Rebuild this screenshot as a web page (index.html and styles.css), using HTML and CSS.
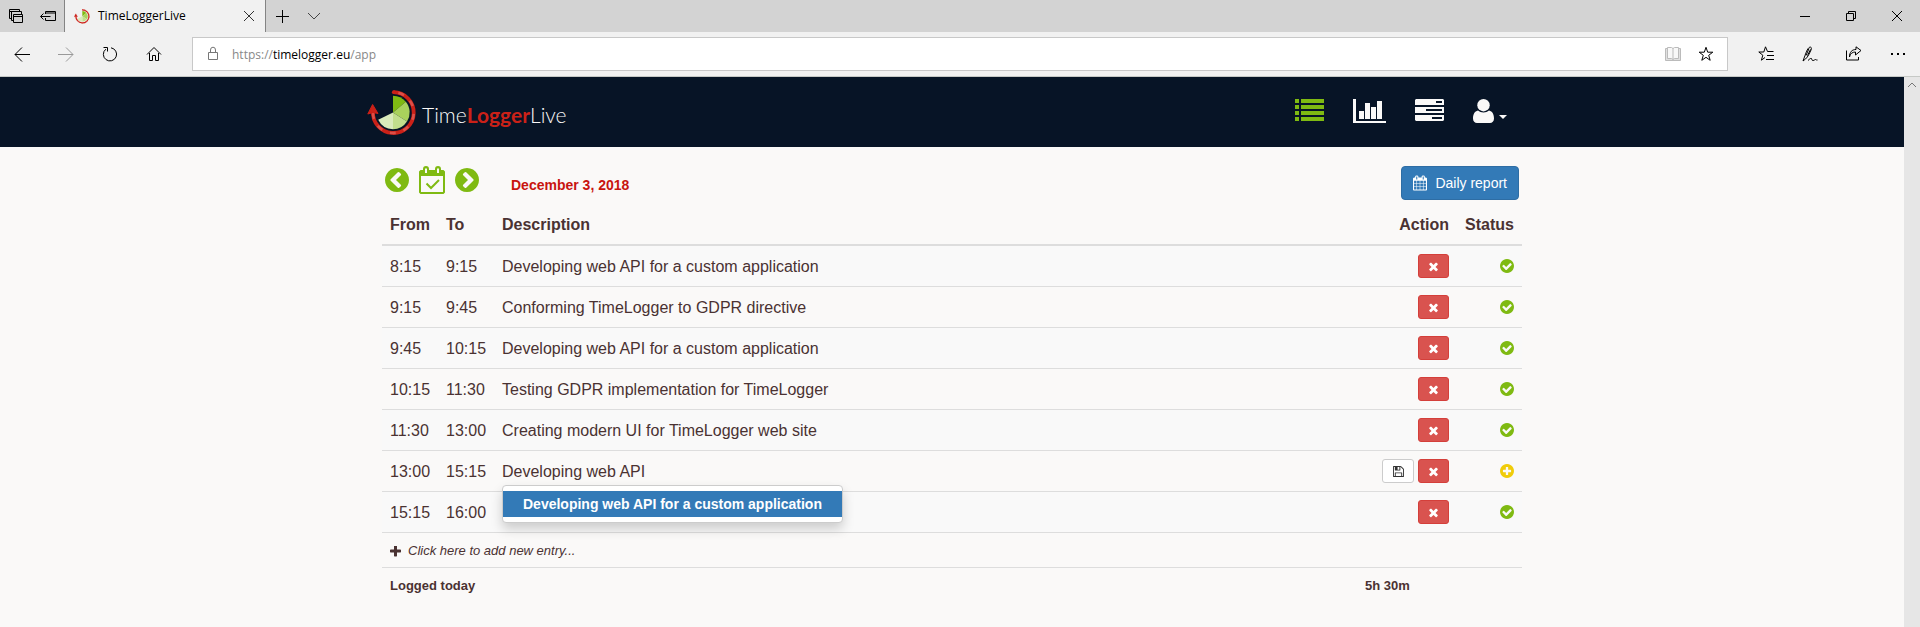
FILE: index.html
```html
<!DOCTYPE html>
<html lang="en">
<head>
<meta charset="utf-8">
<title>TimeLoggerLive</title>
<link rel="stylesheet" href="styles.css">
</head>
<body>
<svg class="sprite" aria-hidden="true">
  <symbol id="check-circle" viewBox="128 128 1536 1536"><path d="M1412 734q0-28-18-46l-91-90q-19-19-45-19t-45 19l-408 407-226-226q-19-19-45-19t-45 19l-91 90q-18 18-18 46 0 27 18 45l362 362q19 19 45 19 27 0 46-19l543-543q18-18 18-45zm252 162q0 209-103 385.5t-279.5 279.5-385.5 103-385.5-103-279.5-279.5-103-385.5 103-385.5 279.5-279.5 385.5-103 385.5 103 279.5 279.5 103 385.5z"/></symbol>
  <symbol id="plus-circle" viewBox="128 128 1536 1536"><path d="M1344 960v-128q0-26-19-45t-45-19h-256v-256q0-26-19-45t-45-19h-128q-26 0-45 19t-19 45v256h-256q-26 0-45 19t-19 45v128q0 26 19 45t45 19h256v256q0 26 19 45t45 19h128q26 0 45-19t19-45v-256h256q26 0 45-19t19-45zm320-64q0 209-103 385.5t-279.5 279.5-385.5 103-385.5-103-279.5-279.5-103-385.5 103-385.5 279.5-279.5 385.5-103 385.5 103 279.5 279.5 103 385.5z"/></symbol>
  <symbol id="chevron-left" viewBox="0 0 1792 1792"><path d="M1037 1395l102-102q19-19 19-45t-19-45l-307-307 307-307q19-19 19-45t-19-45l-102-102q-19-19-45-19t-45 19l-454 454q-19 19-19 45t19 45l454 454q19 19 45 19t45-19zm627-499q0 209-103 385.5t-279.5 279.5-385.5 103-385.5-103-279.5-279.5-103-385.5 103-385.5 279.5-279.5 385.5-103 385.5 103 279.5 279.5 103 385.5z"/></symbol>
  <symbol id="chevron-right" viewBox="0 0 1792 1792"><path d="M845 1395l454-454q19-19 19-45t-19-45l-454-454q-19-19-45-19t-45 19l-102 102q-19 19-19 45t19 45l307 307-307 307q-19 19-19 45t19 45l102 102q19 19 45 19t45-19zm819-499q0 209-103 385.5t-279.5 279.5-385.5 103-385.5-103-279.5-279.5-103-385.5 103-385.5 279.5-279.5 385.5-103 385.5 103 279.5 279.5 103 385.5z"/></symbol>
  <symbol id="times" viewBox="0 0 1792 1792"><path d="M1490 1322q0 40-28 68l-136 136q-28 28-68 28t-68-28l-294-294-294 294q-28 28-68 28t-68-28l-136-136q-28-28-28-68t28-68l294-294-294-294q-28-28-28-68t28-68l136-136q28-28 68-28t68 28l294 294 294-294q28-28 68-28t68 28l136 136q28 28 28 68t-28 68l-294 294 294 294q28 28 28 68z"/></symbol>
  <symbol id="plus" viewBox="192 192 1408 1408"><path d="M1600 736v192q0 40-28 68t-68 28h-416v416q0 40-28 68t-68 28h-192q-40 0-68-28t-28-68v-416h-416q-40 0-68-28t-28-68v-192q0-40 28-68t68-28h416v-416q0-40 28-68t68-28h192q40 0 68 28t28 68v416h416q40 0 68 28t28 68z"/></symbol>
  <symbol id="calendar" viewBox="64 0 1664 1792"><path d="M192 1664h288v-288h-288v288zm352 0h320v-288h-320v288zm-352-352h288v-320h-288v320zm352 0h320v-320h-320v320zm-352-384h288v-288h-288v288zm736 736h320v-288h-320v288zm-384-736h320v-288h-320v288zm768 736h288v-288h-288v288zm-384-352h320v-320h-320v320zm-352-864v-288q0-13-9.500-22.500t-22.500-9.500h-64q-13 0-22.500 9.500t-9.500 22.500v288q0 13 9.500 22.500t22.500 9.500h64q13 0 22.500-9.500t9.500-22.500zm736 864h288v-320h-288v320zm-384-384h320v-288h-320v288zm384 0h288v-288h-288v288zm32-480v-288q0-13-9.500-22.500t-22.500-9.500h-64q-13 0-22.500 9.500t-9.500 22.500v288q0 13 9.500 22.500t22.500 9.500h64q13 0 22.500-9.500t9.500-22.500zm384-64v1280q0 52-38 90t-90 38h-1408q-52 0-90-38t-38-90v-1280q0-52 38-90t90-38h128v-96q0-66 47-113t113-47h64q66 0 113 47t47 113v96h384v-96q0-66 47-113t113-47h64q66 0 113 47t47 113v96h128q52 0 90 38t38 90z"/></symbol>
  <symbol id="save" viewBox="128 128 1536 1536"><path d="M512 1536h768v-384h-768v384zm896 0h128v-896q0-14-10-38.500t-20-34.500l-281-281q-10-10-34-20t-39-10v416q0 40-28 68t-68 28h-576q-40 0-68-28t-28-68v-416h-128v1280h128v-416q0-40 28-68t68-28h832q40 0 68 28t28 68v416zm-384-928v-320q0-13-9.500-22.500t-22.500-9.500h-192q-13 0-22.500 9.500t-9.500 22.500v320q0 13 9.500 22.500t22.500 9.500h192q13 0 22.500-9.500t9.500-22.500zm640 32v928q0 40-28 68t-68 28h-1344q-40 0-68-28t-28-68v-1344q0-40 28-68t68-28h928q40 0 88 20t76 48l280 280q28 28 48 76t20 88z"/></symbol>
  <symbol id="logo" viewBox="0 0 50 46">
    <path fill="#7fba12" d="M26 22.500V5.800A16.700 16.700 0 0 1 38.800 11.800Z"/>
    <path fill="#a9d25c" d="M26 22.500 38.800 11.800A16.700 16.700 0 0 1 40 31.500Z"/>
    <path fill="#c1df8c" d="M26 22.500 40 31.500A16.700 16.700 0 0 1 26 39.200Z"/>
    <path fill="#d9ebbb" d="M26 22.500V39.200A16.700 16.700 0 0 1 11.200 29.800Z"/>
    <path fill="none" stroke="#cb2118" stroke-width="3.800" d="M26.500 2.200A20.400 20.400 0 1 1 6 21"/>
    <path fill="none" stroke="#dc5048" stroke-width="2.600" stroke-dasharray="6 8" stroke-dashoffset="-5" d="M26.500 2.200A20.400 20.400 0 1 1 6 21"/>
    <circle cx="26.800" cy="2.200" r="1.900" fill="#cb2118"/>
    <path fill="#cb2118" stroke="#cb2118" stroke-width="1" stroke-linejoin="round" d="M5.600 14.500 11 23.500 6 22.500.8 24Z"/>
  </symbol>
</svg>

<header class="browser">
  <div class="titlebar">
    <button class="chrome-btn small" aria-label="Tabs set aside"><svg width="16" height="16" viewBox="0 0 16 16"><path d="M3.500 10.500h-2V1.500h10v2M1.500 3.500h9M5.500 12.500h-2V4M4 3.500h9.500V6M5.500 6.500h9v8h-9zM5.500 8.500h9"/></svg></button>
    <button class="chrome-btn small" aria-label="Set these tabs aside"><svg width="16" height="16" viewBox="0 0 16 16"><path d="M5.500 6V3.500h10v9h-10V10M5.500 5h10M.7 8.500h9.800M3.500 5.500l-3 3 3 3"/></svg></button>
    <div class="tab">
      <svg class="favicon"><use href="#logo"/></svg>
      <span class="tab-title">TimeLoggerLive</span>
      <button class="tab-close" aria-label="Close tab"><svg width="12" height="12" viewBox="0 0 12 12"><path d="M1 1l10 10M11 1L1 11"/></svg></button>
    </div>
    <button class="chrome-btn small" aria-label="New tab"><svg width="14" height="14" viewBox="0 0 14 14"><path d="M7.500 1v13M1 7.500h13"/></svg></button>
    <button class="chrome-btn small grey" aria-label="Tab previews"><svg width="14" height="14" viewBox="0 0 14 14"><path d="M1 4l6 6 6-6"/></svg></button>
    <div class="window-btns">
      <button class="chrome-btn wide" aria-label="Minimize"><svg width="12" height="12" viewBox="0 0 12 12"><path d="M1 6.500h10"/></svg></button>
      <button class="chrome-btn wide" aria-label="Restore"><svg width="12" height="12" viewBox="0 0 12 12"><path d="M1.500 3.500h7v7h-7zM3.500 3V1.500h7v7H9"/></svg></button>
      <button class="chrome-btn wide" aria-label="Close"><svg width="12" height="12" viewBox="0 0 12 12"><path d="M1 1l10 10M11 1L1 11"/></svg></button>
    </div>
  </div>
  <div class="toolbar">
    <div class="tool-group">
      <button class="chrome-btn" aria-label="Back"><svg width="16" height="16" viewBox="0 0 16 16"><path d="M1 8.500h15M8 1.500l-7 7 7 7"/></svg></button>
      <button class="chrome-btn faded" aria-label="Forward"><svg width="16" height="16" viewBox="0 0 16 16"><path d="M0 8.500h15M8 1.500l7 7-7 7"/></svg></button>
      <button class="chrome-btn" aria-label="Refresh"><svg width="16" height="16" viewBox="0 0 16 16"><path d="M9 1.800A6.600 6.600 0 1 1 3.800 3.200M1.500 1.500h4v4"/></svg></button>
      <button class="chrome-btn" aria-label="Home"><svg width="16" height="16" viewBox="0 0 16 16"><path d="M1 8.500l7-7 7 7M3.500 7v7.500h3V9.500h3v5h3V7"/></svg></button>
    </div>
    <div class="address">
      <svg class="lock" width="12" height="16" viewBox="0 0 12 16"><path d="M1.500 6.500h9v7h-9zM3.500 6V4a2.500 2.800 0 0 1 5 0v2"/></svg>
      <div class="url" role="textbox" contenteditable="true" spellcheck="false" aria-label="Address">https://<span class="host">timelogger.eu</span>/app</div>
      <button class="in-address book" aria-label="Reading view"><svg width="18" height="16" viewBox="0 0 18 16"><path fill="#e0e0e0" d="M1.500 2.500h15v12h-15z"/><path fill="#f8f8f8" d="M3.500 1.500h4l1.500 1 1.500-1h4v11h-4l-1.500 1-1.500-1h-4zM9 2.500v11"/></svg></button>
      <button class="in-address" aria-label="Favorite"><svg width="16" height="16" viewBox="0 0 16 16"><path d="M8 1.300l1.700 4.900h5.100l-4.100 3.100 1.500 5L8 11.300l-4.200 3 1.500-5-4.100-3.100h5.100z"/></svg></button>
    </div>
    <div class="tool-group">
      <button class="chrome-btn" aria-label="Hub"><svg width="16" height="16" viewBox="0 0 16 16"><path d="M15.500 5.500H9.500L7.500.8 5.800 6H.8l4 3.200-1.400 5L7 11.500M9 9.500h7M8 13.500h8"/></svg></button>
      <button class="chrome-btn" aria-label="Add notes"><svg width="16" height="16" viewBox="0 0 16 16"><path d="M1 15l2-5.500C4.500 5 6 2 7.500 1.300s2.500.5 1.500 2.700-3 7-5.500 9L1 15M4 9.500l3-7M5.500 9.500l3-6M6 14.500c2-2 3-2.500 3.500-2s0 2 1.500 2 1.500-1 2.500-1 1 1 2 .5"/></svg></button>
      <button class="chrome-btn" aria-label="Share"><svg width="16" height="16" viewBox="0 0 16 16"><path d="M.5 4.500v9.500h12v-3M3.500 11c.5-3.500 3-5 6-5v3l5.500-4.500L10 .8v2.700C6 3.500 3.500 6 3.500 11z"/></svg></button>
      <button class="chrome-btn" aria-label="More"><svg width="16" height="16" viewBox="0 0 16 16"><path stroke-width="2" d="M1 8h2M7 8h2M13 8h2"/></svg></button>
    </div>
  </div>
</header>

<div class="viewport">
  <div class="page">
    <nav class="navbar">
      <div class="container nav-inner">
        <a class="brand" href="#"><svg class="brand-logo"><use href="#logo"/></svg><span>Time<b>Logger</b>Live</span></a>
        <div class="menu">
          <a class="active" href="#" aria-label="Time entries"><svg width="29" height="24" viewBox="0 0 29 24"><path d="M0 0h4v4H0zM6 0h23v4H6zM0 6h4v4H0zM6 6h23v4H6zM0 12h4v4H0zM6 12h23v4H6zM0 18h4v4H0zM6 18h23v4H6z"/></svg></a>
          <a href="#" aria-label="Charts"><svg width="33" height="24" viewBox="0 0 33 24"><path d="M0 0h3v22h30v2H0zM6 12h5v8H6zM12 4h5v16h-5zM18 8h5v12h-5zM24 2h5v18h-5z"/></svg></a>
          <a href="#" aria-label="Projects"><svg width="29" height="24" viewBox="0 0 29 24"><path fill-rule="evenodd" d="M1 0h27l1 1v5H0V1zM0 8h29v6H0zM0 16h29v5l-1 1H1l-1-1zM21 2v2h6V2zM11 10v2h16v-2zM17 18v2h10v-2z"/></svg></a>
          <a href="#" aria-label="Account"><svg width="35" height="24" viewBox="0 0 35 24"><path d="M5 11.500c1.400 1.300 3.300 2 5.500 2s4.100-.7 5.500-2c3.500.8 5 4 5 8 0 2.800-1.800 4.500-4 4.500H4c-2.200 0-4-1.700-4-4.500 0-4 1.500-7.200 5-8z"/><circle cx="10.500" cy="6.200" r="6.200"/><path d="M26 16h8l-4 4z"/></svg></a>
        </div>
      </div>
    </nav>

    <main class="container main">
      <div class="day-bar">
        <div class="day-nav">
          <button class="icon-btn" aria-label="Previous day"><svg width="28" height="28"><use href="#chevron-left"/></svg></button>
          <button class="icon-btn" aria-label="Today"><svg width="26" height="28" viewBox="0 0 26 28"><path fill-rule="evenodd" d="M1.500 4H4V3a3 3 0 0 1 6 0v1h6V3a3 3 0 0 1 6 0v1h2.500L26 5.500v21L24.500 28h-23L0 26.500v-21zM2 10v16h22V10zM6 2.500V7h2V2.500zM18 2.500V7h2V2.500z"/><path class="tick" d="M7.500 17.500l4.500 4.500 8-8"/></svg></button>
          <button class="icon-btn" aria-label="Next day"><svg width="28" height="28"><use href="#chevron-right"/></svg></button>
        </div>
        <strong class="date">December 3, 2018</strong>
        <button class="report"><svg width="14" height="16"><use href="#calendar"/></svg>Daily report</button>
      </div>

      <table class="entries">
        <colgroup><col class="c-time"><col class="c-time"><col><col class="c-action"><col class="c-status"></colgroup>
        <thead>
          <tr><th>From</th><th>To</th><th>Description</th><th class="right">Action</th><th class="right">Status</th></tr>
        </thead>
        <tbody>
          <tr><td>8:15</td><td>9:15</td><td>Developing web API for a custom application</td><td class="controls"><div class="actions"><button class="delete" aria-label="Delete"><svg><use href="#times"/></svg></button></div></td><td class="controls"><svg class="status"><use href="#check-circle"/></svg></td></tr>
          <tr><td>9:15</td><td>9:45</td><td>Conforming TimeLogger to GDPR directive</td><td class="controls"><div class="actions"><button class="delete" aria-label="Delete"><svg><use href="#times"/></svg></button></div></td><td class="controls"><svg class="status"><use href="#check-circle"/></svg></td></tr>
          <tr><td>9:45</td><td>10:15</td><td>Developing web API for a custom application</td><td class="controls"><div class="actions"><button class="delete" aria-label="Delete"><svg><use href="#times"/></svg></button></div></td><td class="controls"><svg class="status"><use href="#check-circle"/></svg></td></tr>
          <tr><td>10:15</td><td>11:30</td><td>Testing GDPR implementation for TimeLogger</td><td class="controls"><div class="actions"><button class="delete" aria-label="Delete"><svg><use href="#times"/></svg></button></div></td><td class="controls"><svg class="status"><use href="#check-circle"/></svg></td></tr>
          <tr><td>11:30</td><td>13:00</td><td>Creating modern UI for TimeLogger web site</td><td class="controls"><div class="actions"><button class="delete" aria-label="Delete"><svg><use href="#times"/></svg></button></div></td><td class="controls"><svg class="status"><use href="#check-circle"/></svg></td></tr>
          <tr><td>13:00</td><td>15:15</td><td><div class="edit"><input type="text" value="Developing web API" aria-label="Description"><ul class="suggest"><li><a href="#">Developing web API for a custom application</a></li></ul></div></td><td class="controls"><div class="actions"><button class="save" aria-label="Save"><svg><use href="#save"/></svg></button><button class="delete" aria-label="Delete"><svg><use href="#times"/></svg></button></div></td><td class="controls"><svg class="status pending"><use href="#plus-circle"/></svg></td></tr>
          <tr><td>15:15</td><td>16:00</td><td></td><td class="controls"><div class="actions"><button class="delete" aria-label="Delete"><svg><use href="#times"/></svg></button></div></td><td class="controls"><svg class="status"><use href="#check-circle"/></svg></td></tr>
        </tbody>
        <tfoot>
          <tr><td colspan="5"><button class="add"><svg width="11" height="11"><use href="#plus"/></svg><em>Click here to add new entry...</em></button></td></tr>
          <tr class="total"><th colspan="3">Logged today</th><th colspan="2">5h 30m</th></tr>
        </tfoot>
      </table>
    </main>
  </div>
  <div class="scrollbar"><button aria-label="Scroll up"><svg width="10" height="8" viewBox="0 0 10 8"><path d="M1 6l4-4 4 4"/></svg></button></div>
</div>
</body>
</html>
```
FILE: styles.css
```css
* { box-sizing: border-box; }

body {
  margin: 0;
  min-height: 100vh;
  display: flex;
  flex-direction: column;
  background: #faf9f8;
  color: #4a3232;
  font: 16px/24px "Liberation Sans", Arial, sans-serif;
}

button {
  margin: 0;
  padding: 0;
  border: 0;
  background: none;
  color: inherit;
  font: inherit;
}

svg { display: block; fill: currentColor; }
a { color: inherit; text-decoration: none; }
.sprite { position: absolute; width: 0; height: 0; }

/* Browser frame */
.browser {
  color: #000;
  font: 12px/16px "Open Sans", "Noto Sans", sans-serif;
}
.browser button svg, .lock, .scrollbar svg { fill: none; stroke: currentColor; }
.titlebar { display: flex; height: 32px; background: #d3d3d3; }
.chrome-btn {
  display: flex;
  align-items: center;
  justify-content: center;
  width: 44px;
  height: 100%;
}
.chrome-btn.small { width: 32px; }
.chrome-btn.wide { width: 46px; }
.grey { color: #444; }
.faded { color: #999; }
.tab {
  display: flex;
  align-items: center;
  width: 202px;
  padding: 0 10px 0 9px;
  border: solid #848484;
  border-width: 0 1px;
  background: #f1f1f1;
}
.favicon { width: 16px; height: 15px; }
.tab-title { flex: 1; padding-left: 8px; }
.tab-close { color: #333; }
.window-btns { display: flex; margin-left: auto; }
.toolbar {
  display: flex;
  gap: 16px;
  height: 45px;
  background: #f1f1f1;
  border-bottom: 1px solid #c6c9c6;
}
.tool-group { display: flex; }
.address {
  flex: 1;
  display: flex;
  align-items: center;
  margin: 5px 0;
  padding: 0 13px 0 14px;
  border: 1px solid #c8c8c8;
  background: #fff;
}
.lock { color: #777; }
.url { flex: 1; padding: 2px 0 0 13px; color: #888; outline: 0; }
.host { color: #000; }
.in-address { padding-left: 16px; }
.book { color: #bbb; }

/* Page */
.viewport { flex: 1; display: flex; }
.page { flex: 1; }
.scrollbar { width: 16px; background: #e6e6e6; }
.scrollbar button {
  display: flex;
  align-items: center;
  justify-content: center;
  width: 100%;
  height: 16px;
  color: #777;
}
.container { width: 100%; max-width: 1170px; margin: 0 auto; }

.navbar { background: #071426; color: #faf9f8; }
.nav-inner { display: flex; justify-content: space-between; height: 70px; }
.brand {
  display: flex;
  gap: 5px;
  align-items: center;
  height: 72px;
  font: 300 21px/24px Lato, sans-serif;
}
.brand span { padding-top: 3px; }
.brand b { color: #cb2118; font-weight: 700; }
.brand-logo { width: 50px; height: 46px; }
.menu { display: flex; gap: 29px; padding: 22px 29px 0 0; }
.active { color: #7fba12; }

.main { padding: 19px 15px; }
.day-bar { display: flex; height: 38px; }
.day-nav { display: flex; gap: 8px; padding-left: 1px; }
.icon-btn { height: 28px; color: #7fba12; }
.tick { fill: none; stroke: currentColor; stroke-width: 2px; }
.date { padding: 7px 0 0 30px; color: #c8140f; font-size: 14px; }
.report {
  display: flex;
  align-items: center;
  gap: 8px;
  height: 34px;
  margin: 0 3px 0 auto;
  padding: 0 11px;
  border: 1px solid #2e6da4;
  border-radius: 4px;
  background: #337ab7;
  color: #fff;
  font-size: 14px;
}

.entries { width: 100%; border-spacing: 0; table-layout: fixed; }
.c-time { width: 56px; }
.c-action { width: 100px; }
.c-status { width: 65px; }
th, td { padding: 9px 8px 7px; text-align: left; vertical-align: top; white-space: nowrap; }
thead th { border-bottom: 2px solid #ddd; }
td { border-bottom: 1px solid #ddd; }
tbody tr:nth-child(odd) { background: #f9f9f9; }
.right { text-align: right; }
.controls { padding: 8px; }

.actions { display: flex; justify-content: flex-end; gap: 4px; }
.delete, .save {
  display: flex;
  align-items: center;
  justify-content: center;
  height: 24px;
  border: 1px solid #d43f3a;
  border-radius: 3px;
}
.delete { width: 31px; background: #d9534f; color: #fff; }
.delete svg { width: 13px; height: 13px; }
.save { width: 32px; background: #fff; border-color: #ccc; color: #333; }
.save svg { width: 11px; height: 11px; }
.status { width: 14px; height: 14px; margin: 5px 0 5px auto; color: #7fba12; }
.pending { color: #f0cc0a; }

.edit { position: relative; }
.edit input {
  display: block;
  width: 100%;
  height: 24px;
  padding: 0;
  border: 0;
  outline: 0;
  background: none;
  color: inherit;
  font: inherit;
}
.suggest {
  position: absolute;
  top: 100%;
  left: 0;
  z-index: 1;
  margin: 1px 0 0;
  padding: 5px 0;
  border: 1px solid #ccc;
  border-radius: 4px;
  background: #fff;
  box-shadow: 0 6px 12px rgba(0, 0, 0, 0.18);
  list-style: none;
}
.suggest a {
  display: block;
  padding: 3px 20px;
  background: #337ab7;
  color: #fff;
  font-size: 14px;
  font-weight: 700;
  line-height: 20px;
}

tfoot { font-size: 13px; line-height: 18px; }
.add { display: flex; align-items: center; gap: 7px; }
```
